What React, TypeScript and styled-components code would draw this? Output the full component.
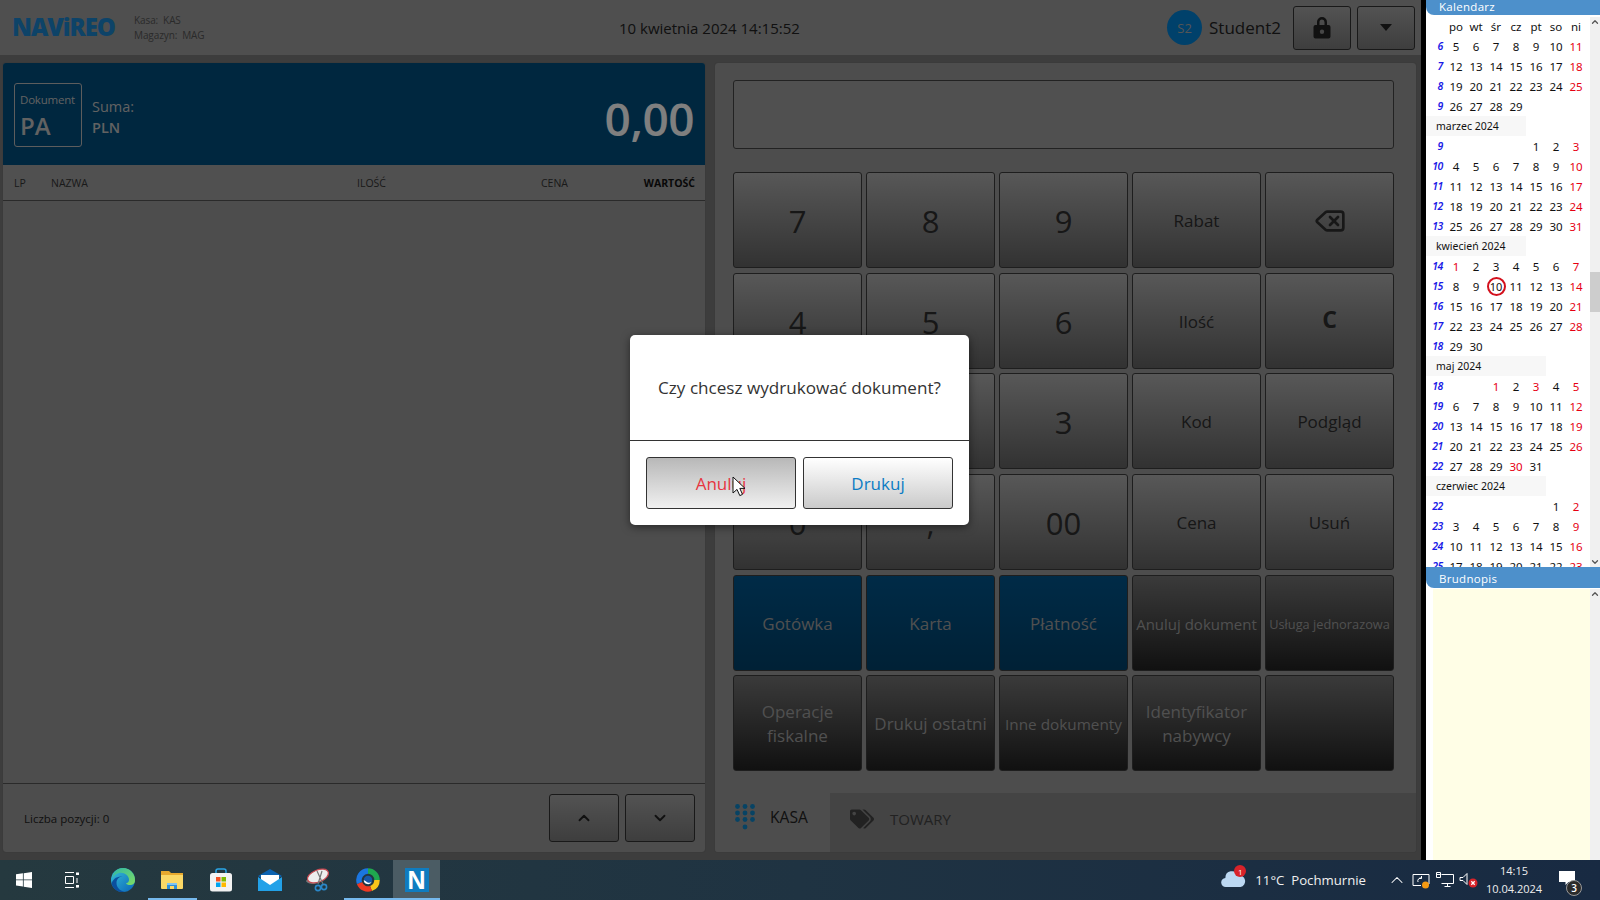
import React from "react"
import styled, { createGlobalStyle } from "styled-components"
import { ChevronDown, ChevronUp, Delete } from "lucide-react"
import { FaTags } from "react-icons/fa"

const uiFont = `"Open Sans", "Noto Sans", "Liberation Sans", sans-serif`

const GlobalStyle = createGlobalStyle`
    html, body {
        margin: 0;
        padding: 0;
        width: 1600px;
        height: 900px;
        overflow: hidden;
        font-family: ${uiFont};
    }
    * {
        box-sizing: border-box;
    }
`

const Screen = styled.div`
    width: 1600px;
    height: 900px;
    display: flex;
    flex-direction: column;
    overflow: hidden;
`

const Desktop = styled.div`
    height: 860px;
    display: flex;
    background: #000;
`

const AppArea = styled.div`
    position: relative;
    width: 1421px;
    margin-right: 5px;
    display: flex;
    flex-direction: column;
    background: #7a7a7a;
`

const TopBar = styled.header`
    height: 55px;
    flex: none;
    display: flex;
    align-items: center;
    padding: 0 6px 0 12px;
    background: #9e9e9e;
`

const Logo = styled.div`
    width: 122px;
    margin-bottom: 2px;
    font-size: 24px;
    font-weight: 800;
    letter-spacing: -1.1px;
    color: #1a86d0;
`

const StoreInfo = styled.div`
    width: 262px;
    font-size: 10px;
    line-height: 14.5px;
    letter-spacing: -0.1px;
    color: #555;
    white-space: pre;
`

const DateLabel = styled.div`
    flex: 1;
    padding-left: 223px;
    font-size: 15px;
    color: #222;
`

const UserName = styled.div`
    display: flex;
    align-items: center;
    gap: 7px;
    margin-right: 6px;
    font-size: 17px;
    color: #222;
`

const Avatar = styled.div`
    width: 35px;
    height: 35px;
    border-radius: 50%;
    display: flex;
    align-items: center;
    justify-content: center;
    background: #0082d6;
    color: #aaa;
    font-size: 13px;
`

const HeaderButton = styled.button`
    width: 58px;
    height: 44px;
    margin-left: 6px;
    padding: 0;
    display: flex;
    align-items: center;
    justify-content: center;
    border: 1px solid #333;
    border-radius: 3px;
    background: linear-gradient(#a6a6a6, #7c7c7c);
    color: #222;
`

const Workspace = styled.main`
    flex: 1;
    display: grid;
    grid-template-columns: 702px 701px;
    gap: 10px;
    padding: 8px 5px 8px 3px;
`

const Panel = styled.section`
    display: flex;
    flex-direction: column;
    overflow: hidden;
    border-radius: 3px;
    background: #9a9a9a;
    box-shadow: 0 0 1px #555;
`

const SumHeader = styled.div`
    height: 102px;
    flex: none;
    display: flex;
    align-items: center;
    padding: 0 11px;
    background: #004e7e;
    color: #fff;
`

const DocBox = styled.div`
    width: 68px;
    height: 64px;
    margin-top: 1px;
    padding: 8px 5px 0;
    border: 1px solid #bbb;
    border-radius: 3px;
    color: #c4c4c4;
    font-size: 11.5px;
    letter-spacing: -0.2px;
    white-space: nowrap;

    b {
        display: block;
        margin-top: 4px;
        font-size: 24px;
        line-height: 30px;
        font-weight: 600;
        letter-spacing: 0;
    }
`

const SumLabel = styled.div`
    margin-left: 10px;
    padding-top: 6px;
    font-size: 14.5px;
    line-height: 21px;
    color: #c4c4c4;

    b {
        display: block;
        font-weight: 600;
    }
`

const SumValue = styled.div`
    margin-left: auto;
    padding-top: 8px;
    font-size: 46px;
    font-weight: 600;
    letter-spacing: -0.5px;
    color: #fff;
`

const TableHead = styled.div`
    height: 36px;
    flex: none;
    display: grid;
    grid-template-columns: 37px 306px 184px 1fr auto;
    align-items: center;
    padding: 0 10px 0 11px;
    border-bottom: 1px solid #555;
    background: #a0a0a0;
    color: #333;
    font-size: 10.5px;

    b {
        color: #111;
    }
`

const TableBody = styled.div`
    flex: 1;
`

const PanelFooter = styled.div`
    height: 69px;
    flex: none;
    display: flex;
    align-items: center;
    gap: 6px;
    padding: 0 10px 0 21px;
    border-top: 1px solid #555;
    font-size: 11.5px;
    color: #222;

    span {
        margin-right: auto;
    }
`

const ScrollButton = styled.button`
    width: 70px;
    height: 48px;
    padding: 0;
    display: flex;
    align-items: center;
    justify-content: center;
    border: 1px solid #333;
    border-radius: 3px;
    background: linear-gradient(#a6a6a6, #7c7c7c);
    color: #222;
`

const Register = styled.div`
    flex: 1;
    display: flex;
    flex-direction: column;
    gap: 23px;
    padding: 17px 22px 0 18px;
`

const DisplayField = styled.div`
    height: 69px;
    border: 1px solid #444;
    border-radius: 3px;
    background: #a0a0a0;
`

const Keypad = styled.div`
    display: grid;
    grid-template-columns: repeat(5, 129px);
    grid-auto-rows: 96px;
    column-gap: 4px;
    row-gap: 4.7px;
`

const keyBackground = {
    light: "linear-gradient(#b0b0b0, #646464)",
    dark: "linear-gradient(#757575, #222)",
    blue: "linear-gradient(#00568e, #00426c)",
}

const Key = styled.button<{ $tone?: keyof typeof keyBackground; $size?: number; $bold?: boolean }>`
    padding: ${(p) => (p.$bold ? "0 2px 4px" : "2px 2px 0")};
    display: flex;
    align-items: center;
    justify-content: center;
    border: 1px solid #3c3c3c;
    border-radius: 3px;
    background: ${(p) => keyBackground[p.$tone ?? "light"]};
    color: ${(p) => (p.$tone === "dark" || p.$tone === "blue" ? "#a0a0a0" : "#2e2e2e")};
    font-family: ${uiFont};
    font-size: ${(p) => p.$size ?? 17}px;
    font-weight: ${(p) => (p.$bold ? 700 : 400)};
    line-height: 24px;
    white-space: pre-line;
`

const TabRow = styled.div`
    height: 59px;
    flex: none;
    display: flex;
    background: #888;
`

const Tab = styled.div<{ $active?: boolean }>`
    width: ${(p) => (p.$active ? "115px" : "auto")};
    display: flex;
    align-items: center;
    gap: ${(p) => (p.$active ? "15px" : "16px")};
    padding: 0 0 ${(p) => (p.$active ? 12 : 7)}px 20px;
    background: ${(p) => (p.$active ? "#9a9a9a" : "transparent")};
    color: ${(p) => (p.$active ? "#222" : "#444")};
    font-size: ${(p) => (p.$active ? 15.6 : 15)}px;

    svg {
        flex: none;
    }
`

const Overlay = styled.div`
    position: absolute;
    inset: 0;
    display: flex;
    align-items: center;
    justify-content: center;
    padding-left: 178px;
    background: rgba(0, 0, 0, 0.5);
`

const Dialog = styled.div`
    width: 339px;
    height: 190px;
    display: flex;
    flex-direction: column;
    border-radius: 5px;
    background: #fff;
    box-shadow: 0 2px 8px rgba(0, 0, 0, 0.5);
`

const DialogText = styled.div`
    height: 106px;
    flex: none;
    display: flex;
    align-items: center;
    justify-content: center;
    border-bottom: 1px solid #333;
    color: #333;
    font-size: 17.1px;
`

const DialogActions = styled.div`
    flex: 1;
    display: flex;
    justify-content: space-between;
    padding: 16px 16px 0;
`

const DialogButton = styled.button<{ $pressed?: boolean }>`
    width: 150px;
    height: 52px;
    border: 1px solid #333;
    border-radius: 3px;
    background: ${(p) =>
        p.$pressed ? "linear-gradient(#b8b8b8, #f0f0f0)" : "linear-gradient(#fff, #cacaca)"};
    color: ${(p) => (p.$pressed ? "#e6363f" : "#0c7cc4")};
    font-family: ${uiFont};
    font-size: 17px;
`

const Cursor = styled.svg`
    position: absolute;
    left: 732px;
    top: 476px;
`

const SidePanel = styled.aside`
    width: 174px;
    flex: none;
    display: flex;
    flex-direction: column;
    background: #fff;
`

const SideTitle = styled.div<{ $height: number }>`
    height: ${(p) => p.$height}px;
    flex: none;
    display: flex;
    align-items: flex-end;
    padding: 0 0 ${(p) => (p.$height > 15 ? 2 : 1)}px 13px;
    border-bottom-left-radius: 8px;
    background: #4d90cb;
    color: #fff;
    font-size: 11.5px;
    line-height: 15px;
    letter-spacing: 0.3px;
`

const CalendarWrap = styled.div`
    height: 552px;
    flex: none;
    display: flex;
    overflow: hidden;
`

const CalendarGrid = styled.div`
    width: 164px;
    flex: none;
    display: grid;
    grid-template-columns: repeat(8, 20px);
    grid-auto-rows: 20px;
    padding-top: 1px;
    align-content: start;
    font-family: "Noto Sans", "Liberation Sans", sans-serif;
    font-size: 11.5px;
`

const Cell = styled.div<{ $red?: boolean }>`
    display: flex;
    align-items: center;
    justify-content: center;
    color: ${(p) => (p.$red ? "#e60012" : "#111")};
`

const WeekCell = styled(Cell)`
    justify-content: flex-end;
    padding-right: 3px;
    color: #1a1ae6;
    font-style: italic;
    font-weight: 600;
    font-size: 10.5px;
    letter-spacing: -0.4px;
`

const TodayCell = styled(Cell)`
    border: 2px solid #d3101c;
    border-radius: 50%;
    width: 19px;
    height: 19px;
    margin: auto;
    font-size: 11px;
`

const MonthCell = styled.div<{ $span: number }>`
    grid-column: 1 / span ${(p) => p.$span};
    display: flex;
    align-items: center;
    padding-left: 10px;
    background: #f7f7f7;
    color: #111;
    font-size: 10.5px;
    white-space: nowrap;
`

const ScrollTrack = styled.div`
    width: 10px;
    margin-top: 2px;
    margin-left: auto;
    flex: none;
    background: #f0f0f0;
    color: #555;
    display: flex;
    flex-direction: column;
    align-items: center;
`

const ScrollThumb = styled.div`
    width: 100%;
    height: 40px;
    margin: 245px 0 auto;
    background: #cdcdcd;
`

const NotePad = styled.div`
    flex: 1;
    display: flex;
    margin: 1px 0 0 7px;
    background: #fffee6;

    ${ScrollTrack} {
        margin-top: 0;
    }
`

const Taskbar = styled.footer`
    height: 40px;
    flex: none;
    display: flex;
    align-items: stretch;
    background: linear-gradient(90deg, #25393f, #1f3342 50%, #182a42);
    color: #fff;
`

const TaskItem = styled.div<{ $width?: number; $open?: boolean; $active?: boolean }>`
    position: relative;
    width: ${(p) => p.$width ?? 49}px;
    flex: none;
    display: flex;
    align-items: center;
    justify-content: center;
    background: ${(p) => (p.$active ? "#4b5c64" : "transparent")};
    border-bottom: 2px solid ${(p) => (p.$open || p.$active ? "#76b9ed" : "transparent")};
    padding-top: 2px;
`

const TaskGap = styled.div`
    width: 2.5px;
    flex: none;
`

const NBadge = styled.div`
    width: 24px;
    height: 24px;
    display: flex;
    align-items: center;
    justify-content: center;
    margin-left: 1px;
    background: #0f7cc0;
    color: #fff;
    font-family: "Liberation Sans", sans-serif;
    font-size: 25px;
    font-weight: 700;
`

const Tray = styled.div`
    margin-left: auto;
    display: flex;
    align-items: center;
`

const WeatherIcon = styled.div`
    position: relative;
    width: 25px;
    height: 20px;
    margin-right: 9px;

    span {
        position: absolute;
        right: 0;
        top: -5px;
        width: 12px;
        height: 12px;
        border-radius: 50%;
        display: flex;
        align-items: center;
        justify-content: center;
        background: #d8232a;
        font-size: 8px;
    }
`

const WeatherText = styled.div`
    font-size: 13.2px;
    white-space: pre;
    margin-right: 19px;
    color: #f0f0f0;
`

const TrayIcon = styled.div`
    width: 24px;
    height: 24px;
    display: flex;
    align-items: center;
    justify-content: center;
`

const Clock = styled.div`
    width: 66px;
    text-align: center;
    font-size: 11px;
    line-height: 18px;
    color: #eee;
`

const NoticeIcon = styled.div`
    position: relative;
    width: 41px;
    margin-left: 10px;
    margin-right: 2px;
    height: 100%;
    display: flex;
    align-items: center;
    padding: 0 0 4px 2px;

    span {
        position: absolute;
        left: 9px;
        top: 20px;
        width: 16px;
        height: 16px;
        border: 1px solid #999;
        border-radius: 50%;
        display: flex;
        align-items: center;
        justify-content: center;
        background: #2b2b2b;
        font-size: 10px;
        font-weight: 600;
    }
`

const keys: { label?: string; tone?: keyof typeof keyBackground; size?: number; bold?: boolean; icon?: boolean }[] = [
    { label: "7", size: 31 },
    { label: "8", size: 31 },
    { label: "9", size: 31 },
    { label: "Rabat" },
    { icon: true },
    { label: "4", size: 31 },
    { label: "5", size: 31 },
    { label: "6", size: 31 },
    { label: "Ilość" },
    { label: "C", size: 23, bold: true },
    { label: "1", size: 31 },
    { label: "2", size: 31 },
    { label: "3", size: 31 },
    { label: "Kod" },
    { label: "Podgląd" },
    { label: "0", size: 31 },
    { label: ",", size: 31 },
    { label: "00", size: 31 },
    { label: "Cena" },
    { label: "Usuń" },
    { label: "Gotówka", tone: "blue" },
    { label: "Karta", tone: "blue" },
    { label: "Płatność", tone: "blue" },
    { label: "Anuluj dokument", tone: "dark", size: 15 },
    { label: "Usługa jednorazowa", tone: "dark", size: 12.8 },
    { label: "Operacje\nfiskalne", tone: "dark" },
    { label: "Drukuj ostatni", tone: "dark", size: 17 },
    { label: "Inne dokumenty", tone: "dark", size: 15.3 },
    { label: "Identyfikator\nnabywcy", tone: "dark" },
    { tone: "dark" },
]

// months as they stand in the scrolled calendar; the first one is cut off at the top
const months = [
    { title: "", span: 0, week: 6, first: 5, last: 29, offset: 0, holidays: [] as number[] },
    { title: "marzec 2024", span: 5, week: 9, first: 1, last: 31, offset: 4, holidays: [] },
    { title: "kwiecień 2024", span: 5, week: 14, first: 1, last: 30, offset: 0, holidays: [1] },
    { title: "maj 2024", span: 6, week: 18, first: 1, last: 31, offset: 2, holidays: [1, 3, 30] },
    { title: "czerwiec 2024", span: 6, week: 22, first: 1, last: 30, offset: 5, holidays: [] },
]

const dayNames = ["po", "wt", "śr", "cz", "pt", "so", "ni"]

const Calendar = () => {
    const cells: React.ReactNode[] = [<Cell key="corner" />]
    dayNames.forEach((d) => cells.push(<Cell key={d}>{d}</Cell>))

    months.forEach((m, mi) => {
        if (m.title) {
            cells.push(
                <MonthCell key={m.title} $span={m.span}>
                    {m.title}
                </MonthCell>
            )
            for (let i = m.span; i < 8; i++) cells.push(<Cell key={`${mi}-fill-${i}`} />)
        }
        let week = m.week
        let col = m.offset
        cells.push(<WeekCell key={`${mi}-w-${week}`}>{week}</WeekCell>)
        for (let i = 0; i < col; i++) cells.push(<Cell key={`${mi}-pad-${i}`} />)
        for (let day = m.first; day <= m.last; day++) {
            if (col === 7) {
                col = 0
                week += 1
                cells.push(<WeekCell key={`${mi}-w-${week}`}>{week}</WeekCell>)
            }
            const red = col === 6 || m.holidays.includes(day)
            const today = m.title.startsWith("kwiecień") && day === 10
            const Day = today ? TodayCell : Cell
            cells.push(
                <Day key={`${mi}-${day}`} $red={red}>
                    {day}
                </Day>
            )
            col += 1
        }
        for (; col < 7; col++) cells.push(<Cell key={`${mi}-end-${col}`} />)
    })

    return <CalendarGrid>{cells}</CalendarGrid>
}

const LockIcon = () => (
    <svg width="18" height="23" viewBox="0 0 18 23">
        <path
            fillRule="evenodd"
            d="M4 9V6a5 5 0 0 1 10 0v3h1.500A2 2 0 0 1 17.500 11v9.500a2 2 0 0 1-2 2h-13a2 2 0 0 1-2-2V11a2 2 0 0 1 2-2zM6.500 9h5V6a2.500 2.500 0 0 0-5 0zM9 13.500a2.200 2.200 0 1 0 0 4.400 2.200 2.200 0 0 0 0-4.400z"
            fill="currentColor"
        />
    </svg>
)

const CaretIcon = () => (
    <svg width="12" height="7" viewBox="0 0 12 7">
        <path d="M0 0h12L6 7z" fill="currentColor" />
    </svg>
)

const KeypadIcon = () => (
    <svg width="20" height="26" viewBox="0 0 20 26" fill="#0e86c8">
        {[2.5, 10, 17.5].flatMap((x) =>
            [2.5, 9, 15.5].map((y) => <circle key={`${x}-${y}`} cx={x} cy={y} r="2.4" />)
        )}
        <circle cx="10" cy="23" r="2.4" />
    </svg>
)

const ArrowCursor = () => (
    <Cursor width="14" height="21" viewBox="0 0 14 21">
        <path d="M1 1v16l4-3.600 2.800 6.200 2.700-1.200-2.700-6h5.200z" fill="#fff" stroke="#111" strokeWidth="1" />
    </Cursor>
)

const WindowsIcon = () => (
    <svg width="16" height="16" viewBox="0 0 16 16" fill="#fff">
        <path d="M0 2.300l6.900-1v6.200H0zM7.700 1.200L16 0v7.500H7.700zM0 8.300h6.900v6.300l-6.900-1zM7.700 8.300H16V16l-8.300-1.200z" />
    </svg>
)

const TaskViewIcon = () => (
    <svg width="16" height="16" viewBox="0 0 16 16" fill="none" stroke="#fff" strokeWidth="1">
        <path d="M1 .5h9M1 15.500h9M1.500 4.500h8v7h-8zM13 1v1.500M13 6v5M13 14v1.500" />
        <path d="M12 .5h3v2.500h-3zM12 13h3v2.500h-3z" fill="#fff" stroke="none" />
    </svg>
)

const EdgeIcon = () => (
    <svg width="26" height="26" viewBox="0 0 26 26">
        <defs>
            <linearGradient id="edgeA" x1="0" y1="0" x2="1" y2="1">
                <stop offset="0" stopColor="#37c2d8" />
                <stop offset="1" stopColor="#0a63b8" />
            </linearGradient>
            <linearGradient id="edgeB" x1="0" y1="0" x2="1" y2="1">
                <stop offset="0" stopColor="#2fb9a5" />
                <stop offset="1" stopColor="#7fdc62" />
            </linearGradient>
        </defs>
        <circle cx="13" cy="13" r="12" fill="url(#edgeA)" />
        <path d="M13 1a12 12 0 0 1 12 12.500c0 3-2.400 4.600-5 4.600-2 0-3.600-.8-4-1.800 2.400-.4 3-2 3-3.500 0-4-4-7-8-7-4 0-7 2.400-8.600 5.500C3 5.500 7 1 13 1z" fill="url(#edgeB)" />
        <path d="M12.500 9.500c-3.800 0-6 3-6 6.500 0 4 3 8 8 8.700-5 1.200-11-1.500-13-8 1-4 5-8 11-7.200z" fill="#0b4f9e" />
    </svg>
)

const FolderIcon = () => (
    <svg width="24" height="22" viewBox="0 0 24 22">
        <path d="M1 2h8l2 2h12v3H1z" fill="#e8a92e" />
        <path d="M1 6h22v13a1 1 0 0 1-1 1H2a1 1 0 0 1-1-1z" fill="#fbd866" />
        <path d="M7 20v-6h10v6h-3v-3h-4v3z" fill="#2f8fd8" />
        <path d="M7 14h10v2H7z" fill="#7fc4f0" />
    </svg>
)

const StoreIcon = () => (
    <svg width="24" height="24" viewBox="0 0 24 24">
        <path d="M7 6V3a2 2 0 0 1 2-2h6a2 2 0 0 1 2 2v3" fill="none" stroke="#2aa6e8" strokeWidth="1.500" />
        <rect x="1" y="5" width="22" height="18.500" rx="2.500" fill="#f2f2f2" />
        <rect x="7" y="9" width="4.500" height="4.500" fill="#f25022" />
        <rect x="12.500" y="9" width="4.500" height="4.500" fill="#7fba00" />
        <rect x="7" y="14.500" width="4.500" height="4.500" fill="#00a4ef" />
        <rect x="12.500" y="14.500" width="4.500" height="4.500" fill="#ffb900" />
    </svg>
)

const MailIcon = () => (
    <svg width="24" height="22" viewBox="0 0 24 22">
        <path d="M0 7l12-7 12 7-12 8z" fill="#0b62b0" />
        <path d="M3 6h18v7l-9 4-9-4z" fill="#fff" />
        <path d="M0 8l12 8 12-8v14H0z" fill="#22a1e8" />
    </svg>
)

const SnipIcon = () => (
    <svg width="26" height="24" viewBox="0 0 26 24">
        <path d="M1 12c3 4 12 3 18-3" fill="none" stroke="#777" strokeWidth="3" />
        <ellipse cx="12" cy="8" rx="11" ry="6" transform="rotate(-22 12 8)" fill="#eee" stroke="#c84a52" strokeWidth="1.200" />
        <path d="M11 3l6 13M16 3l-4 13" stroke="#777" strokeWidth="1.200" />
        <circle cx="18" cy="19" r="2.600" fill="none" stroke="#2a86c8" strokeWidth="1.600" />
        <circle cx="12" cy="20" r="2.600" fill="none" stroke="#2a86c8" strokeWidth="1.600" />
    </svg>
)

const ChromeLikeIcon = () => (
    <svg width="24" height="24" viewBox="0 0 24 24" fill="none" strokeWidth="5.500">
        <path d="M12 3a9 9 0 0 1 9 9" stroke="#1fa84f" />
        <path d="M21 12a9 9 0 0 1-6 8.500" stroke="#f9c41a" />
        <path d="M15 20.500A9 9 0 0 1 3.500 15" stroke="#ee3a24" />
        <path d="M3.500 15A9 9 0 0 1 12 3" stroke="#1b76e0" />
        <circle cx="12" cy="12" r="4.200" fill="#1858a8" stroke="none" />
        <path d="M7.800 12a4.200 4.200 0 0 0 8 1.800c-1.200 1-2.800 1.200-4.200.6-1.200-.5-2.200-1.500-3.800-2.400z" fill="#fff" stroke="none" />
    </svg>
)

const CloudIcon = () => (
    <svg width="25" height="18" viewBox="0 0 25 18">
        <path d="M5 17a4.500 4.500 0 0 1-.6-9A6.500 6.500 0 0 1 17 5.500 5.800 5.800 0 0 1 19.500 17z" fill="#bcd8f2" />
    </svg>
)

const SyncIcon = () => (
    <svg width="20" height="18" viewBox="0 0 20 18" fill="none" stroke="#fff" strokeWidth="1">
        <path d="M2 3.500h16V13H12M2 3.500v11h8" />
        <path d="M7 11a3 3 0 0 1 3.500-4M10.500 5v2.500H8" />
        <circle cx="14.500" cy="14" r="3.500" fill="#f59a12" stroke="none" />
    </svg>
)

const NetworkIcon = () => (
    <svg width="18" height="18" viewBox="0 0 18 18" fill="none" stroke="#fff" strokeWidth="1">
        <path d="M5.500 3.500h12v9h-12M8.500 15.500h6M11.500 12.500v3M.5 1.500h4v5h-4zM.5 3.500h4" />
    </svg>
)

const SpeakerIcon = () => (
    <svg width="20" height="18" viewBox="0 0 20 18" fill="none" stroke="#fff" strokeWidth="1">
        <path d="M1 6.500h3l4-4v11l-4-4H1z" />
        <circle cx="14" cy="12" r="4.500" fill="#d8232a" stroke="none" />
        <path d="M12.300 10.300l3.400 3.400M15.700 10.300l-3.400 3.400" strokeWidth="1.300" />
    </svg>
)

const NoticeGlyph = () => (
    <svg width="16" height="14" viewBox="0 0 16 14" fill="#fff">
        <path d="M0 0h16v11H9.500l-3 3v-3H0z" />
    </svg>
)

export default function App() {
    return (
        <Screen>
            <GlobalStyle />
            <Desktop>
                <AppArea>
                    <TopBar>
                        <Logo>NAViREO</Logo>
                        <StoreInfo>{"Kasa:  KAS\nMagazyn:  MAG"}</StoreInfo>
                        <DateLabel>10 kwietnia 2024 14:15:52</DateLabel>
                        <UserName>
                            <Avatar>S2</Avatar>
                            Student2
                        </UserName>
                        <HeaderButton>
                            <LockIcon />
                        </HeaderButton>
                        <HeaderButton>
                            <CaretIcon />
                        </HeaderButton>
                    </TopBar>
                    <Workspace>
                        <Panel>
                            <SumHeader>
                                <DocBox>
                                    Dokument
                                    <b>PA</b>
                                </DocBox>
                                <SumLabel>
                                    Suma:
                                    <b>PLN</b>
                                </SumLabel>
                                <SumValue>0,00</SumValue>
                            </SumHeader>
                            <TableHead>
                                <span>LP</span>
                                <span>NAZWA</span>
                                <span>ILOŚĆ</span>
                                <span>CENA</span>
                                <b>WARTOŚĆ</b>
                            </TableHead>
                            <TableBody />
                            <PanelFooter>
                                <span>Liczba pozycji: 0</span>
                                <ScrollButton>
                                    <ChevronUp size={18} strokeWidth={2.5} />
                                </ScrollButton>
                                <ScrollButton>
                                    <ChevronDown size={18} strokeWidth={2.5} />
                                </ScrollButton>
                            </PanelFooter>
                        </Panel>
                        <Panel>
                            <Register>
                                <DisplayField />
                                <Keypad>
                                    {keys.map((k, i) => (
                                        <Key key={i} $tone={k.tone} $size={k.size} $bold={k.bold}>
                                            {k.icon ? <Delete size={32} strokeWidth={2} /> : k.label}
                                        </Key>
                                    ))}
                                </Keypad>
                            </Register>
                            <TabRow>
                                <Tab $active>
                                    <KeypadIcon />
                                    KASA
                                </Tab>
                                <Tab>
                                    <FaTags size={24} />
                                    TOWARY
                                </Tab>
                            </TabRow>
                        </Panel>
                    </Workspace>
                    <Overlay>
                        <Dialog>
                            <DialogText>Czy chcesz wydrukować dokument?</DialogText>
                            <DialogActions>
                                <DialogButton $pressed>Anuluj</DialogButton>
                                <DialogButton>Drukuj</DialogButton>
                            </DialogActions>
                        </Dialog>
                    </Overlay>
                    <ArrowCursor />
                </AppArea>
                <SidePanel>
                    <SideTitle $height={15}>Kalendarz</SideTitle>
                    <CalendarWrap>
                        <Calendar />
                        <ScrollTrack>
                            <ChevronUp size={10} strokeWidth={3} />
                            <ScrollThumb />
                            <ChevronDown size={10} strokeWidth={3} />
                        </ScrollTrack>
                    </CalendarWrap>
                    <SideTitle $height={21}>Brudnopis</SideTitle>
                    <NotePad>
                        <ScrollTrack>
                            <ChevronUp size={10} strokeWidth={3} />
                        </ScrollTrack>
                    </NotePad>
                </SidePanel>
            </Desktop>
            <Taskbar>
                <TaskItem $width={48}>
                    <WindowsIcon />
                </TaskItem>
                <TaskItem $width={48}>
                    <TaskViewIcon />
                </TaskItem>
                <TaskGap />
                <TaskItem>
                    <EdgeIcon />
                </TaskItem>
                <TaskItem $open>
                    <FolderIcon />
                </TaskItem>
                <TaskItem>
                    <StoreIcon />
                </TaskItem>
                <TaskItem>
                    <MailIcon />
                </TaskItem>
                <TaskItem>
                    <SnipIcon />
                </TaskItem>
                <TaskItem $open>
                    <ChromeLikeIcon />
                </TaskItem>
                <TaskItem $width={47} $active>
                    <NBadge>N</NBadge>
                </TaskItem>
                <Tray>
                    <WeatherIcon>
                        <CloudIcon />
                        <span>1</span>
                    </WeatherIcon>
                    <WeatherText>{"11°C  Pochmurnie"}</WeatherText>
                    <TrayIcon>
                        <ChevronUp size={20} strokeWidth={1.25} />
                    </TrayIcon>
                    <TrayIcon>
                        <SyncIcon />
                    </TrayIcon>
                    <TrayIcon>
                        <NetworkIcon />
                    </TrayIcon>
                    <TrayIcon>
                        <SpeakerIcon />
                    </TrayIcon>
                    <Clock>
                        14:15
                        <br />
                        10.04.2024
                    </Clock>
                    <NoticeIcon>
                        <NoticeGlyph />
                        <span>3</span>
                    </NoticeIcon>
                </Tray>
            </Taskbar>
        </Screen>
    )
}
